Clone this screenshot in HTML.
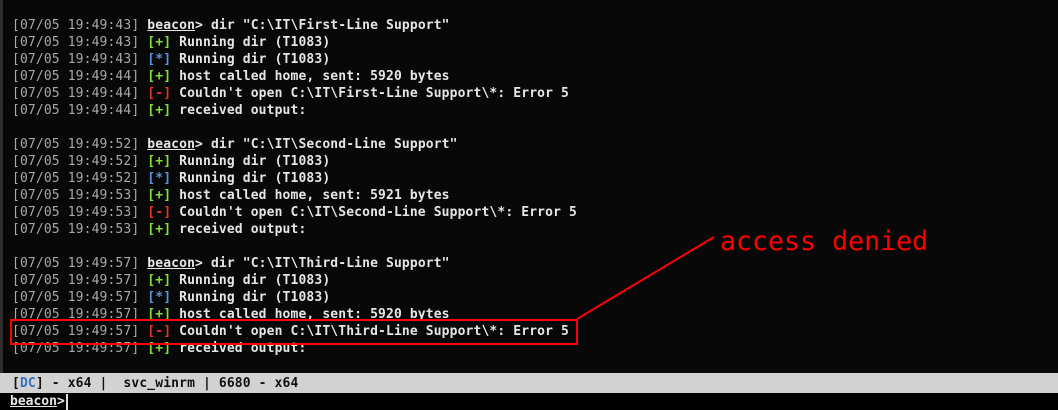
<!DOCTYPE html>
<html><head><meta charset="utf-8"><style>
body{margin:0;width:1058px;height:410px;background:#080808;overflow:hidden;position:relative;font-family:"DejaVu Sans Mono","Liberation Mono",monospace;font-size:13px;font-weight:bold}
.lb{position:absolute;left:0;top:0;width:3px;height:373px;background:#2e2e2e}
.t{position:absolute;left:12px;top:17px;color:#e6e6e6;line-height:17px;letter-spacing:0.13px}
.l{height:17px;white-space:pre}
.ts{color:#a8a8a8;font-weight:normal}.g{color:#7ee03a}.b{color:#5a95d8}.r{color:#e83030}
u{text-decoration:underline}
.sb{position:absolute;left:0;top:373px;width:1058px;height:20px;background:#d2d2d2;color:#111;white-space:pre;line-height:21px;padding-left:12px;box-sizing:border-box;letter-spacing:0.13px}
.in{position:absolute;left:0;top:393px;width:1058px;height:17px;background:#000;}
.in span{position:absolute;left:10px;top:0;line-height:17px;color:#e6e6e6}
.cur{position:absolute;left:66px;top:394px;width:2px;height:16px;background:#ddd}
.box{position:absolute;left:10px;top:319px;width:564px;height:22px;border:2px solid #f00}
.ad{position:absolute;left:720px;top:226px;color:#f00;font-size:26.6px;font-weight:normal;line-height:32px;white-space:pre}
</style></head><body>
<div class="lb"></div>
<div class="t"><div class="l"><span class="ts">[07/05 19:49:43]</span> <u>beacon</u>&gt; dir "C:\IT\First-Line Support"</div><div class="l"><span class="ts">[07/05 19:49:43]</span> <span class="g">[+]</span> Running dir (T1083)</div><div class="l"><span class="ts">[07/05 19:49:43]</span> <span class="b">[*]</span> Running dir (T1083)</div><div class="l"><span class="ts">[07/05 19:49:44]</span> <span class="g">[+]</span> host called home, sent: 5920 bytes</div><div class="l"><span class="ts">[07/05 19:49:44]</span> <span class="r">[-]</span> Couldn't open C:\IT\First-Line Support\*: Error 5</div><div class="l"><span class="ts">[07/05 19:49:44]</span> <span class="g">[+]</span> received output:</div><div class="l"></div><div class="l"><span class="ts">[07/05 19:49:52]</span> <u>beacon</u>&gt; dir "C:\IT\Second-Line Support"</div><div class="l"><span class="ts">[07/05 19:49:52]</span> <span class="g">[+]</span> Running dir (T1083)</div><div class="l"><span class="ts">[07/05 19:49:52]</span> <span class="b">[*]</span> Running dir (T1083)</div><div class="l"><span class="ts">[07/05 19:49:53]</span> <span class="g">[+]</span> host called home, sent: 5921 bytes</div><div class="l"><span class="ts">[07/05 19:49:53]</span> <span class="r">[-]</span> Couldn't open C:\IT\Second-Line Support\*: Error 5</div><div class="l"><span class="ts">[07/05 19:49:53]</span> <span class="g">[+]</span> received output:</div><div class="l"></div><div class="l"><span class="ts">[07/05 19:49:57]</span> <u>beacon</u>&gt; dir "C:\IT\Third-Line Support"</div><div class="l"><span class="ts">[07/05 19:49:57]</span> <span class="g">[+]</span> Running dir (T1083)</div><div class="l"><span class="ts">[07/05 19:49:57]</span> <span class="b">[*]</span> Running dir (T1083)</div><div class="l"><span class="ts">[07/05 19:49:57]</span> <span class="g">[+]</span> host called home, sent: 5920 bytes</div><div class="l"><span class="ts">[07/05 19:49:57]</span> <span class="r">[-]</span> Couldn't open C:\IT\Third-Line Support\*: Error 5</div><div class="l"><span class="ts">[07/05 19:49:57]</span> <span class="g">[+]</span> received output:</div></div>
<div class="box"></div>
<svg style="position:absolute;left:0;top:0" width="1058" height="410"><line x1="577" y1="319" x2="714" y2="237" stroke="#f00" stroke-width="2"/></svg>
<div class="ad">access denied</div>
<div class="sb">[<span style="color:#3a6fc0">DC</span>] - x64 |  svc_winrm | 6680 - x64</div>
<div class="in"><span><u>beacon</u>&gt;</span></div>
<div class="cur"></div>
</body></html>
